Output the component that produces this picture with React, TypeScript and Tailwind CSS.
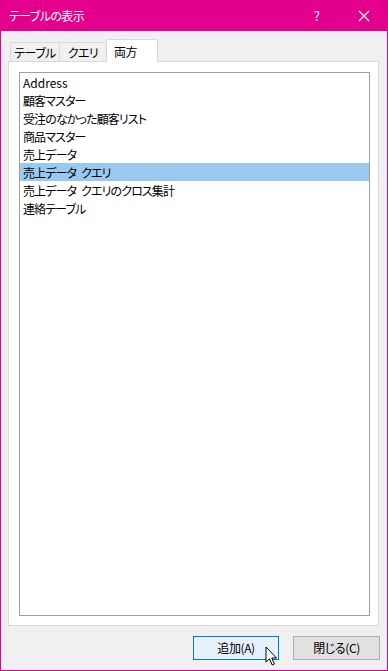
import React from "react";

const items = [
  "Address",
  "顧客マスター",
  "受注のなかった顧客リスト",
  "商品マスター",
  "売上データ",
  "売上データ\u2002クエリ",
  "売上データ\u2002クエリのクロス集計",
  "連絡テーブル",
];

const font =
  "[font-family:'Noto_Sans_CJK_JP','Noto_Sans',sans-serif] [font-feature-settings:'palt']";

export default function App() {
  const selected = 5;
  return (
    <div
      className={`relative w-[388px] h-[671px] bg-[#f0f0f0] border-x border-b border-[#e3008c] flex flex-col text-[12px] leading-[18px] text-black ${font}`}
    >
      {/* title bar */}
      <div className="h-[31px] shrink-0 bg-[#e3008c] flex items-center text-white pl-[8px]">
        <span className="text-[12px] tracking-[-0.6px]">テーブルの表示</span>
        <span className="ml-auto mr-[38px] text-[13px]">?</span>
        <svg width="12" height="12" viewBox="0 0 12 12" className="mr-[17px]">
          <path d="M1 1 L11 11 M11 1 L1 11" stroke="white" strokeWidth="1.2" />
        </svg>
      </div>

      <div className="flex flex-col pl-[7px] pr-[8px] pt-[8px]">
        {/* tabs */}
        <div className="relative z-10 flex items-start h-[23px] -mb-px pl-[2px] tracking-[-0.6px]">
          <div className="mt-[3px] h-[19px] w-[50px] border border-b-0 border-[#d9d9d9] flex items-center justify-center pt-[2px]">
            テーブル
          </div>
          <div className="mt-[3px] h-[19px] w-[47px] border border-l-0 border-b-0 border-[#d9d9d9] flex items-center justify-center pt-[2px]">
            クエリ
          </div>
          <div className="-ml-px h-[23px] w-[52px] bg-white border border-b-0 border-[#d9d9d9] pl-[7px] pt-[3px]">
            両方
          </div>
        </div>

        {/* panel */}
        <div className="h-[565px] bg-white border border-[#d9d9d9] pl-[10px] pt-[10px] pr-[8px]">
          <div className="h-[544px] border border-[#a0a0a0] flex flex-col">
            {items.map((t, i) => (
              <div
                key={t}
                className={`h-[18px] pl-[3px] pt-[2px] leading-[16px] whitespace-nowrap ${
                  /[^\x00-\x7f]/.test(t) ? "tracking-[-0.9px]" : ""
                } ${i === selected ? "bg-[#99c9ef]" : ""}`}
              >
                {t}
              </div>
            ))}
          </div>
        </div>
      </div>

      {/* buttons */}
      <div className="flex justify-end gap-[14px] pr-[7px] mt-[10px] tracking-[-0.4px]">
        <div className="w-[86px] h-[24px] border border-[#0078d7] bg-[#e5f1fb] flex items-center justify-center">
          追加(A)
        </div>
        <div className="w-[87px] h-[24px] border border-[#adadad] bg-[#e1e1e1] flex items-center justify-center">
          閉じる(C)
        </div>
      </div>

      {/* mouse pointer */}
      <svg
        width="13"
        height="21"
        viewBox="0 0 13 21"
        className="absolute left-[264px] top-[646px]"
      >
        <path
          d="M1 1 L1 16 L4.5 12.8 L7.2 19 L9.4 18 L6.8 12 L11.5 12 Z"
          fill="white"
          stroke="black"
          strokeWidth="1"
          strokeLinejoin="miter"
        />
      </svg>
    </div>
  );
}
